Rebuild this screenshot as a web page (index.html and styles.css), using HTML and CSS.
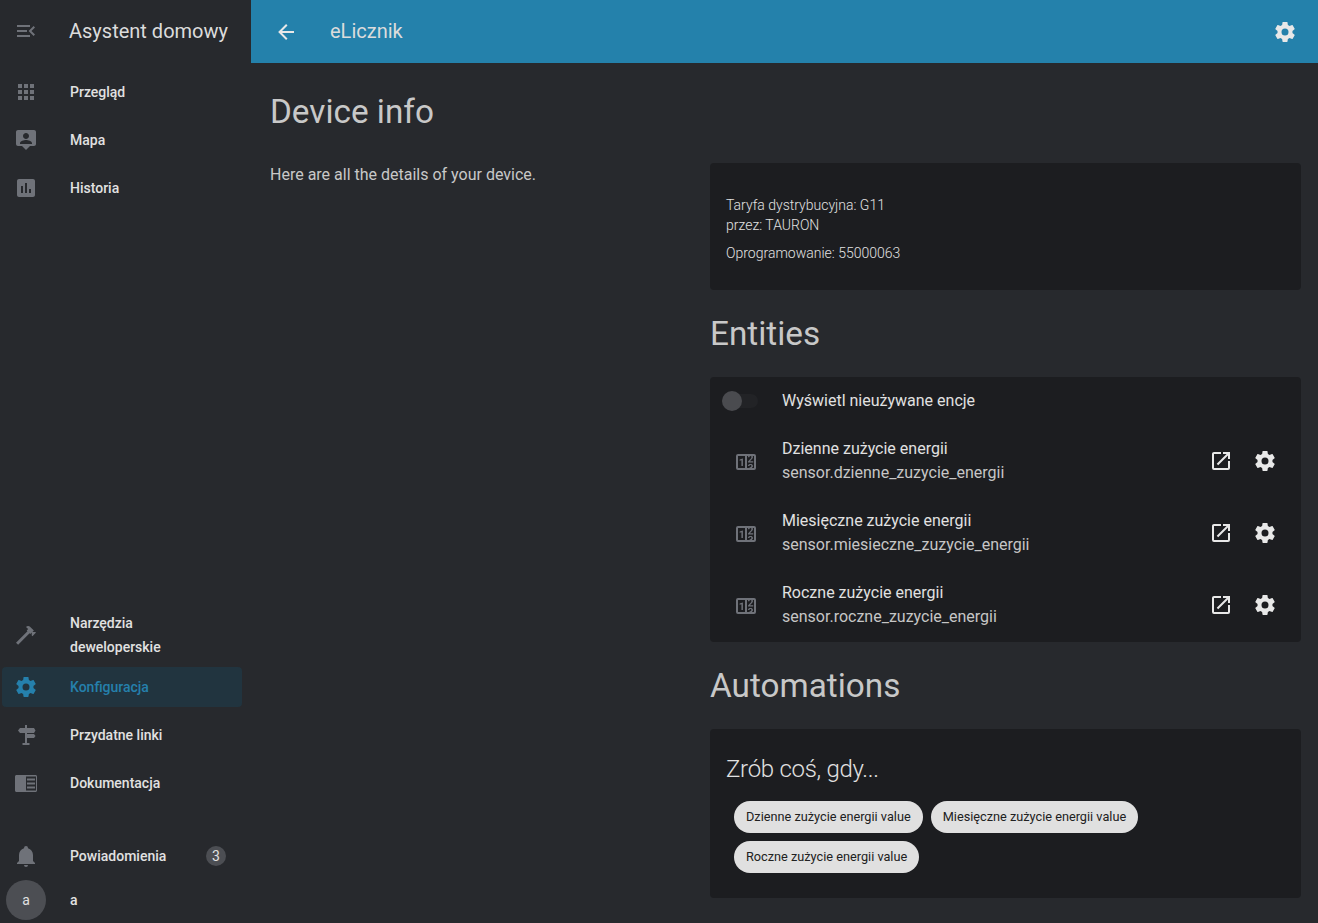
FILE: index.html
```html
<!DOCTYPE html>
<html lang="pl">
<head>
    <meta charset="UTF-8">
    <title>eLicznik</title>
    <link rel="stylesheet" href="styles.css">
</head>
<body>
    <svg class="defs" aria-hidden="true">
        <symbol id="cog" viewBox="0 0 24 24"><path d="M12,15.5A3.5,3.5 0 0,1 8.5,12A3.5,3.5 0 0,1 12,8.5A3.5,3.5 0 0,1 15.5,12A3.5,3.5 0 0,1 12,15.5M19.43,12.97C19.47,12.65 19.5,12.33 19.5,12C19.5,11.67 19.47,11.34 19.43,11L21.54,9.37C21.73,9.22 21.78,8.95 21.66,8.73L19.66,5.27C19.54,5.05 19.27,4.96 19.05,5.05L16.56,6.05C16.04,5.66 15.5,5.32 14.87,5.07L14.5,2.42C14.46,2.18 14.25,2 14,2H10C9.75,2 9.54,2.18 9.5,2.42L9.13,5.07C8.5,5.32 7.96,5.66 7.44,6.05L4.95,5.05C4.73,4.96 4.46,5.05 4.34,5.27L2.34,8.73C2.21,8.95 2.27,9.22 2.46,9.37L4.57,11C4.53,11.34 4.5,11.67 4.5,12C4.5,12.33 4.53,12.65 4.57,12.97L2.46,14.63C2.27,14.78 2.21,15.05 2.34,15.27L4.34,18.73C4.46,18.95 4.73,19.03 4.95,18.95L7.44,17.94C7.96,18.34 8.5,18.68 9.13,18.93L9.5,21.58C9.54,21.82 9.75,22 10,22H14C14.25,22 14.46,21.82 14.5,21.58L14.87,18.93C15.5,18.67 16.04,18.34 16.56,17.94L19.05,18.95C19.27,19.03 19.54,18.95 19.66,18.73L21.66,15.27C21.78,15.05 21.73,14.78 21.54,14.63L19.43,12.97Z"/></symbol>
        <symbol id="open" viewBox="0 0 24 24"><path d="M14,3V5H17.59L7.76,14.83L9.17,16.24L19,6.41V10H21V3M19,19H5V5H12V3H5C3.89,3 3,3.9 3,5V19A2,2 0 0,0 5,21H19A2,2 0 0,0 21,19V12H19V19Z"/></symbol>
        <symbol id="counter" viewBox="0 0 24 24"><path d="M4,4H20A2,2 0 0,1 22,6V18A2,2 0 0,1 20,20H4A2,2 0 0,1 2,18V6A2,2 0 0,1 4,4M4,6V18H11V6H4M20,18V6H18.76C19,6.54 18.95,7.07 18.95,7.13C18.88,7.8 18.41,8.5 18.24,8.75L15.91,11.3L19.23,11.28L19.24,12.5L14.04,12.47L14,11.47C14,11.47 17.05,8.24 17.2,7.95C17.34,7.67 17.91,6 16.5,6C15.27,6.05 15.41,7.3 15.41,7.3L13.87,7.31C13.87,7.31 13.88,6.65 14.25,6H13V18H15.58L15.57,17.14L16.54,17.13C16.54,17.13 17.45,16.97 17.46,16.08C17.5,15.08 16.65,15.08 16.5,15.08C16.37,15.08 15.43,15.13 15.43,15.95H13.91C13.91,15.95 13.95,13.89 16.5,13.89C19.1,13.89 18.96,15.91 18.96,15.91C18.96,15.91 19,17.16 17.85,17.63L18.37,18H20M8.92,16H7.42V10.2L5.62,10.76V9.53L8.76,8.41H8.92V16Z"/></symbol>
    </svg>

    <aside class="sidebar">
        <div class="brand">
            <svg class="icon" viewBox="0 0 24 24"><path d="M21,15.61L19.59,17L14.58,12L19.59,7L21,8.39L17.44,12L21,15.61M3,6H16V8H3V6M3,13V11H13V13H3M3,18V16H16V18H3Z"/></svg>
            <span class="brand-title">Asystent domowy</span>
        </div>
        <nav class="nav">
            <a class="nav-item">
                <svg class="icon" viewBox="0 0 24 24"><path d="M16,20H20V16H16M16,14H20V10H16M10,8H14V4H10M16,8H20V4H16M10,14H14V10H10M4,14H8V10H4M4,20H8V16H4M10,20H14V16H10M4,8H8V4H4V8Z"/></svg>
                <span>Przegląd</span>
            </a>
            <a class="nav-item">
                <svg class="icon" viewBox="0 0 24 24"><path d="M20 2H4C2.9 2 2 2.9 2 4V16C2 17.1 2.9 18 4 18H8L12 22L16 18H20C21.1 18 22 17.1 22 16V4C22 2.9 21.1 2 20 2M12 5C13.66 5 15 6.34 15 8S13.66 11 12 11 9 9.66 9 8 10.34 5 12 5M18 16H6V15C6 13 10 11.9 12 11.9S18 13 18 15V16Z"/></svg>
                <span>Mapa</span>
            </a>
            <a class="nav-item">
                <svg class="icon" viewBox="0 0 24 24"><path d="M19 3H5C3.9 3 3 3.9 3 5V19C3 20.1 3.9 21 5 21H19C20.1 21 21 20.1 21 19V5C21 3.9 20.1 3 19 3M9 17H7V10H9V17M13 17H11V7H13V17M17 17H15V13H17V17Z"/></svg>
                <span>Historia</span>
            </a>
        </nav>
        <nav class="nav nav-bottom">
            <a class="nav-item nav-item-tall">
                <svg class="icon" viewBox="0 0 24 24"><path d="M2 19.63L13.43 8.2L12.72 7.5L14.14 6.07L12 3.89C13.2 2.7 15.09 2.7 16.27 3.89L19.87 7.5L18.45 8.91H21.29L22 9.62L18.45 13.21L17.74 12.5V9.62L16.27 11.04L15.56 10.33L4.13 21.76L2 19.63Z"/></svg>
                <span>Narzędzia<br>deweloperskie</span>
            </a>
            <a class="nav-item active">
                <svg class="icon" viewBox="0 0 24 24"><use href="#cog"/></svg>
                <span>Konfiguracja</span>
            </a>
            <a class="nav-item">
                <svg class="icon" viewBox="0 0 24 24"><path d="M11 2H13V5H20L21.500 7.500L20 10H13V11H20L21.500 13L20 15H13V20H15.500V22H8.500V20H11V10H6L4 7.500L6 5H11Z"/></svg>
                <span>Przydatne linki</span>
            </a>
            <a class="nav-item">
                <svg class="icon" viewBox="0 0 24 24"><path fill-rule="evenodd" d="M2.500 4H21.500C22.300 4 23 4.700 23 5.500V19.500C23 20.300 22.300 21 21.500 21H2.500C1.700 21 1 20.300 1 19.500V5.500C1 4.700 1.700 4 2.500 4ZM12 5.500V19.500H22V5.500ZM13 7.500H21V9.500H13ZM13 11.500H21V13.500H13ZM13 15.500H21V17.500H13Z"/></svg>
                <span>Dokumentacja</span>
            </a>
        </nav>
        <div class="nav-footer">
            <a class="nav-item">
                <svg class="icon" viewBox="0 0 24 24"><path d="M21,19V20H3V19L5,17V11C5,7.9 7.03,5.17 10,4.29C10,4.19 10,4.1 10,4A2,2 0 0,1 12,2A2,2 0 0,1 14,4C14,4.1 14,4.19 14,4.29C16.97,5.17 19,7.9 19,11V17L21,19M14,21A2,2 0 0,1 12,23A2,2 0 0,1 10,21"/></svg>
                <span>Powiadomienia</span>
                <span class="count">3</span>
            </a>
            <div class="user">
                <span class="avatar">a</span>
                <span>a</span>
            </div>
        </div>
    </aside>

    <div class="page">
        <header class="topbar">
            <svg class="icon back" viewBox="0 0 24 24"><path d="M20,11V13H8L13.5,18.5L12.08,19.92L4.16,12L12.08,4.08L13.5,5.5L8,11H20Z"/></svg>
            <span class="topbar-title">eLicznik</span>
            <svg class="icon topbar-cog" viewBox="0 0 24 24"><use href="#cog"/></svg>
        </header>

        <main class="content">
            <section class="intro">
                <h1>Device info</h1>
                <p>Here are all the details of your device.</p>
            </section>

            <section class="details">
                <div class="card card-info">
                    <div>Taryfa dystrybucyjna: G11</div>
                    <div>przez: TAURON</div>
                    <div class="firmware">Oprogramowanie: 55000063</div>
                </div>

                <h2>Entities</h2>
                <div class="card card-entities">
                    <div class="toggle-row">
                        <span class="toggle"><span class="toggle-knob"></span></span>
                        <span class="toggle-label">Wyświetl nieużywane encje</span>
                    </div>
                    <div class="entity">
                        <svg class="icon entity-icon" viewBox="0 0 24 24"><use href="#counter"/></svg>
                        <div class="entity-text">
                            <div>Dzienne zużycie energii</div>
                            <div class="entity-id">sensor.dzienne_zuzycie_energii</div>
                        </div>
                        <svg class="icon action" viewBox="0 0 24 24"><use href="#open"/></svg>
                        <svg class="icon action" viewBox="0 0 24 24"><use href="#cog"/></svg>
                    </div>
                    <div class="entity">
                        <svg class="icon entity-icon" viewBox="0 0 24 24"><use href="#counter"/></svg>
                        <div class="entity-text">
                            <div>Miesięczne zużycie energii</div>
                            <div class="entity-id">sensor.miesieczne_zuzycie_energii</div>
                        </div>
                        <svg class="icon action" viewBox="0 0 24 24"><use href="#open"/></svg>
                        <svg class="icon action" viewBox="0 0 24 24"><use href="#cog"/></svg>
                    </div>
                    <div class="entity">
                        <svg class="icon entity-icon" viewBox="0 0 24 24"><use href="#counter"/></svg>
                        <div class="entity-text">
                            <div>Roczne zużycie energii</div>
                            <div class="entity-id">sensor.roczne_zuzycie_energii</div>
                        </div>
                        <svg class="icon action" viewBox="0 0 24 24"><use href="#open"/></svg>
                        <svg class="icon action" viewBox="0 0 24 24"><use href="#cog"/></svg>
                    </div>
                </div>

                <h2>Automations</h2>
                <div class="card card-auto">
                    <h3>Zrób coś, gdy...</h3>
                    <div class="chips">
                        <span class="chip">Dzienne zużycie energii value</span>
                        <span class="chip">Miesięczne zużycie energii value</span>
                        <span class="chip">Roczne zużycie energii value</span>
                    </div>
                </div>
            </section>
        </main>
    </div>
</body>
</html>
```

FILE: styles.css
```css
* {
    box-sizing: border-box;
}

html,
body {
    height: 100%;
}

body {
    margin: 0;
    display: flex;
    overflow: hidden;
    background-color: #27292d;
    color: #e1e1e1;
    font-family: Roboto, "Noto Sans", sans-serif;
}

.defs {
    display: none;
}

.icon {
    width: 24px;
    height: 24px;
    flex: none;
    fill: #6f7279;
}

/* sidebar */

.sidebar {
    width: 251px;
    flex: none;
    display: flex;
    flex-direction: column;
}

.brand {
    height: 63px;
    padding: 0 0 2px 14px;
    display: flex;
    align-items: center;
}

.brand-title {
    margin-left: 31px;
    font-size: 20px;
    color: #dcdcdc;
}

.nav {
    width: 240px;
    margin: 9px 0 0 2px;
    display: flex;
    flex-direction: column;
    gap: 8px;
}

.nav-bottom {
    margin-top: auto;
}

.nav-item {
    min-height: 40px;
    padding-left: 12px;
    display: flex;
    align-items: center;
    border-radius: 4px;
    font-size: 14px;
    font-weight: 500;
    line-height: 24px;
    color: #e1e1e1;
}

.nav-item > span:first-of-type {
    margin-left: 32px;
}

.nav-item-tall {
    min-height: 48px;
}

.nav-item.active {
    background-color: #21343f;
    color: #2580ac;
}

.nav-item.active .icon {
    fill: #2580ac;
}

.nav-footer {
    margin: 33px 0 3px;
}

.nav-footer .nav-item {
    width: 240px;
    margin-left: 2px;
}

.count {
    min-width: 20px;
    height: 20px;
    margin-left: auto;
    margin-right: 16px;
    border-radius: 50%;
    background-color: #4c4e53;
    font-weight: 400;
    line-height: 20px;
    text-align: center;
}

.user {
    height: 40px;
    margin-top: 4px;
    padding-left: 6px;
    display: flex;
    align-items: center;
    font-size: 14px;
    font-weight: 500;
}

.avatar {
    width: 40px;
    height: 40px;
    margin-right: 24px;
    border-radius: 50%;
    background-color: #4c4e53;
    font-weight: 400;
    line-height: 40px;
    text-align: center;
}

/* main */

.page {
    flex: 1;
    min-width: 0;
}

.topbar {
    height: 63px;
    padding: 0 21px 0 23px;
    display: flex;
    align-items: center;
    background-color: #2481ab;
}

.topbar .icon {
    fill: #e8e8e8;
}

.topbar-title {
    margin: 0 0 2px 32px;
    font-size: 20px;
    color: #dcdcdc;
}

.topbar-cog {
    margin-left: auto;
}

.content {
    padding: 0 17px 0 19px;
    display: grid;
    grid-template-columns: 440px 591px;
}

h1,
h2 {
    margin: 0;
    font-size: 33.3px;
    font-weight: 400;
    color: #c8c8c8;
}

.intro h1 {
    margin-top: 29px;
    line-height: 40px;
}

.intro p {
    margin: 31px 0 0;
    font-size: 16px;
    line-height: 24px;
    color: #c8c8c8;
}

.details {
    padding-top: 100px;
}

.details h2 {
    height: 87px;
    padding-top: 24px;
    line-height: 40px;
}

.card {
    border-radius: 4px;
    background-color: #1c1d20;
}

.card-info {
    height: 127px;
    padding: 32px 16px 0;
    font-size: 14px;
    font-weight: 300;
    line-height: 20px;
    color: #e1e1e1;
}

.firmware {
    margin-top: 8px;
}

.card-entities {
    height: 265px;
}

.toggle-row {
    height: 48px;
    padding-left: 12px;
    display: flex;
    align-items: center;
}

.toggle {
    width: 36px;
    height: 14px;
    position: relative;
    border-radius: 7px;
    background-color: #222326;
}

.toggle-knob {
    width: 20px;
    height: 20px;
    position: absolute;
    top: -3px;
    left: 0;
    border-radius: 50%;
    background-color: #4a4b4f;
}

.toggle-label {
    margin: 0 0 2px 24px;
    font-size: 16px;
}

.entity {
    height: 72px;
    padding: 0 24px;
    display: flex;
    align-items: center;
}

.entity-icon {
    margin-top: 2px;
}

.entity-text {
    flex: 1;
    margin-left: 24px;
    font-size: 16px;
    line-height: 24px;
}

.entity-id {
    color: #c6c6c6;
    font-size: 16px;
}

.entity .action {
    fill: #e8e8e8;
    margin-left: 20px;
}

.card-auto {
    height: 169px;
    padding: 24px 16px 0;
}

.card-auto h3 {
    margin: 0;
    font-size: 24px;
    font-weight: 300;
    letter-spacing: -0.012em;
    line-height: 32px;
    color: #e1e1e1;
}

.chips {
    margin-top: 16px;
    padding-left: 8px;
    display: flex;
    flex-wrap: wrap;
    gap: 8px;
    width: 430px;
}

.chip {
    height: 32px;
    padding: 0 12px;
    border-radius: 16px;
    background-color: #e0e0e0;
    color: #212121;
    font-size: 12.72px;
    line-height: 32px;
}
```
